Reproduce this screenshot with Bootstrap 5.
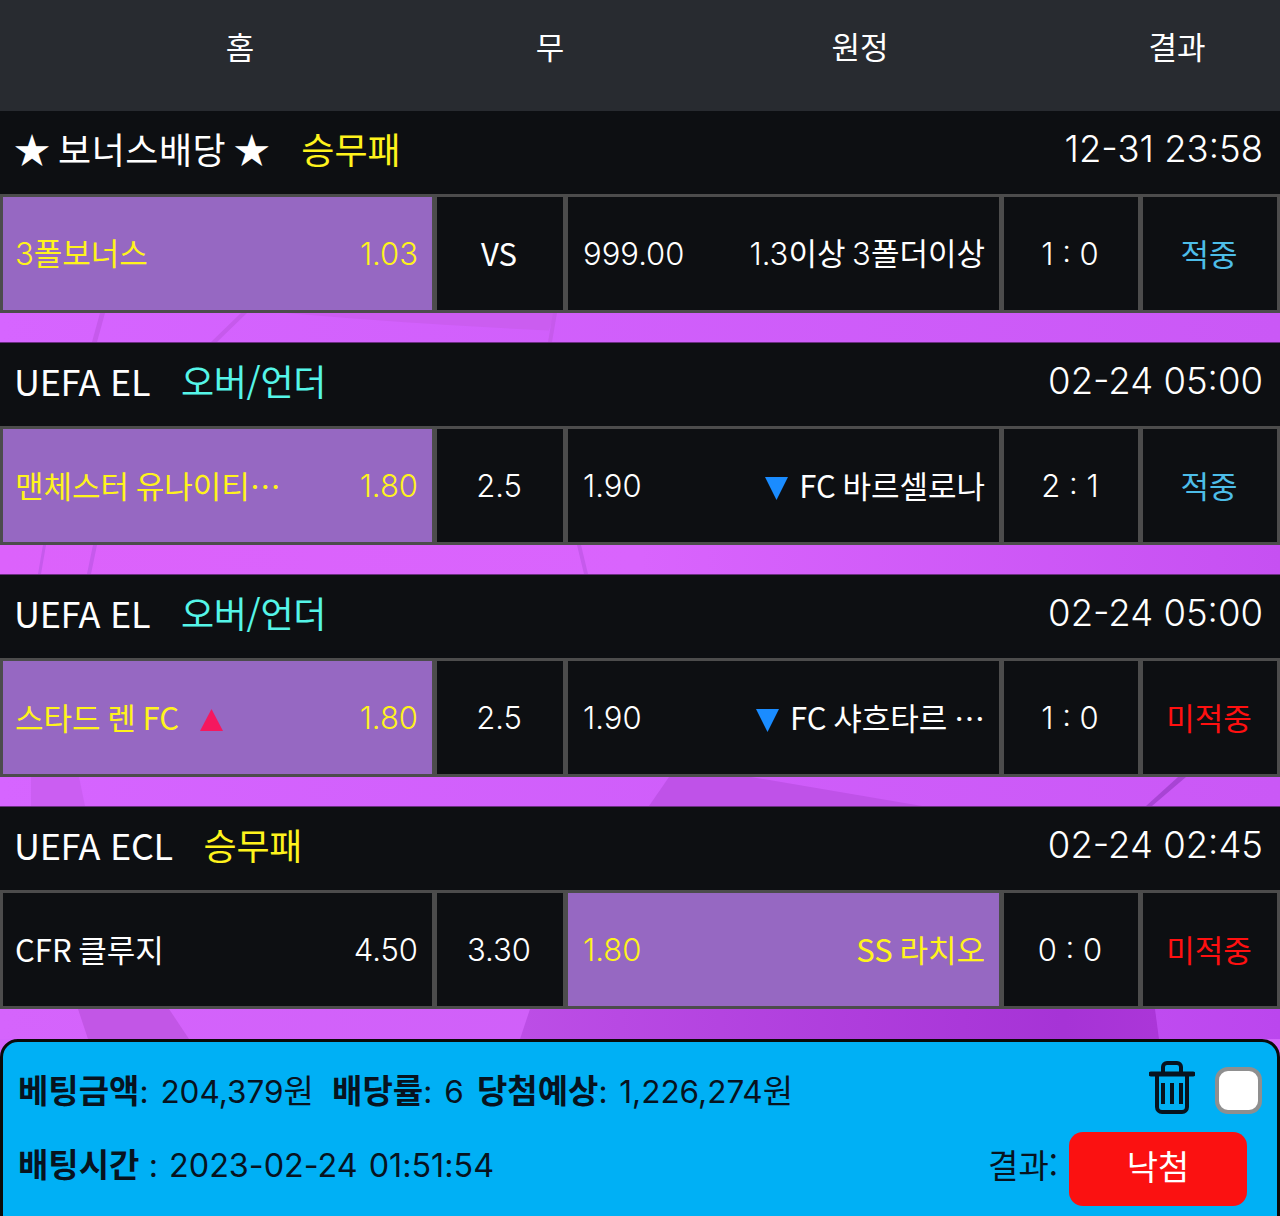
<!DOCTYPE html>
<html lang="ko">
<head>
    <meta charset="UTF-8">
    <meta name="viewport" content="width=device-width, initial-scale=1.0">
    <link href="https://cdn.jsdelivr.net/npm/bootstrap@5.3.2/dist/css/bootstrap.min.css" rel="stylesheet"/>
    <script src="https://cdn.jsdelivr.net/npm/bootstrap@5.3.2/dist/js/bootstrap.bundle.min.js"></script>
    <title>베팅내역</title>
    <style>
        html, body {
            height: 1216px;
            overflow: hidden;
        }
        body {
            background-color: #d263fb;
            color: #fff;
            font-family: "Noto Sans CJK KR", "Noto Sans", sans-serif;
            font-weight: 400;
        }
        .num {
            font-family: Inter, "Noto Sans", sans-serif;
            font-weight: 300;
        }
        .top-head {
            height: 111px;
            background-color: #282b30;
            font-size: 31px;
            display: grid;
            grid-template-columns: 480px 140px 480px 154px;
            padding-bottom: 18px;
        }
        .game-title {
            height: 83px;
            background-color: #0d0f12;
            font-size: 36px;
            padding: 0 17px 10px 14px;
        }
        .game-title > .num {
            font-size: 36.5px;
            padding-top: 4px;
        }
        .league-name {
            letter-spacing: -.3px;
        }
        .title-tag {
            margin-left: 21px;
        }
        .star-head {
            word-spacing: -3px;
            letter-spacing: .5px;
        }
        .game-row {
            height: 119px;
            padding: 3px;
            background-color: #4c4c4c;
            display: grid;
            grid-template-columns: 429px 126px 431px 134px 134px;
            column-gap: 5px;
            font-size: 31px;
        }
        .game-cell {
            background-color: #0d0f12;
            padding: 0 14px 1px 12px;
        }
        .game-cell.num {
            padding-top: 2px;
            padding-bottom: 0;
        }
        .game-cell > .num {
            padding-top: 2px;
        }
        .game-cell.mid-cell {
            padding-left: 15px;
        }
        .game-cell.picked {
            background-color: #9668c2;
            color: #fff31c;
        }
        .team-name {
            white-space: nowrap;
            word-spacing: -2px;
        }
        .tri-down {
            vertical-align: -2px;
            margin-right: 4px;
        }
        .tri-up {
            vertical-align: -1px;
            margin-left: 14px;
        }
        .c-yellow { color: #fff31c; }
        .c-cyan { color: #55f5e8; }
        .c-hit { color: #4dbde8; }
        .c-miss { color: #ff1010; }
        .band {
            display: block;
            width: 1280px;
            height: 30px;
            border-bottom: 1px solid #6a2f80;
        }
        .last-band {
            border-bottom: 0;
        }
        .bet-panel {
            height: 190px;
            background-color: #00b0f5;
            border: 3px solid #0a0a0a;
            border-radius: 18px 18px 0 0;
            color: #07131f;
            font-size: 33px;
            padding: 11px 15px 0;
        }
        .bet-panel b {
            font-weight: 700;
        }
        .bet-panel .num {
            font-size: 31.5px;
            font-weight: 400;
            word-spacing: 3px;
        }
        .bet-panel .bet-date {
            font-size: 32.3px;
            word-spacing: 2px;
        }
        .bet-label {
            margin-left: 9px;
        }
        .bet-line {
            height: 74px;
        }
        .bet-line.first-line {
            height: 75px;
        }
        .trash-icon {
            margin-bottom: 6px;
        }
        .check-box {
            width: 47px;
            height: 47px;
            background-color: #fff;
            border: 4px solid #8f8f8f;
            border-radius: 13px;
            margin-left: 20px;
        }
        .lost-btn {
            width: 178px;
            height: 74px;
            background-color: #fb1111;
            color: #fff;
            border-radius: 14px;
            font-size: 34px;
            margin: 7px 15px 0 11px;
            padding-bottom: 6px;
        }
    </style>
</head>
<body>
    <div class="top-head text-center align-items-center">
        <div>홈</div>
        <div>무</div>
        <div>원정</div>
        <div>결과</div>
    </div>

    <div class="game-title d-flex justify-content-between align-items-center">
        <div><span class="star-head">★ 보너스배당 ★</span> <span class="c-yellow title-tag">승무패</span></div>
        <div class="num">12-31 23:58</div>
    </div>
    <div class="game-row">
        <div class="game-cell picked d-flex justify-content-between align-items-center"><span class="team-name"><span class="num">3</span>폴보너스</span><span class="num">1.03</span></div>
        <div class="game-cell d-flex justify-content-center align-items-center">VS</div>
        <div class="game-cell mid-cell d-flex justify-content-between align-items-center"><span class="num">999.00</span><span class="team-name"><span class="num">1.3</span>이상 <span class="num">3</span>폴더이상</span></div>
        <div class="game-cell d-flex justify-content-center align-items-center num">1 : 0</div>
        <div class="game-cell c-hit d-flex justify-content-center align-items-center">적중</div>
    </div>
    <svg class="band" viewBox="0 0 1280 30" preserveAspectRatio="none">
        <defs><linearGradient id="g1" x1="0" x2="1"><stop offset="0" stop-color="#d665ff"/><stop offset="1" stop-color="#ca58f6"/></linearGradient></defs>
        <rect width="1280" height="30" fill="url(#g1)"/>
        <path d="M100 0h5l-8 30h-5zM241 0h6l-30 30h-6z" fill="#c65aec"/>
        <path d="M286 0H555L549 18Q420 12 286 0z" fill="#cb5df0"/>
        <path d="M553 0h4l-5 30h-4z" fill="#c65aec"/>
    </svg>

    <div class="game-title d-flex justify-content-between align-items-center">
        <div class="league-name">UEFA EL <span class="c-cyan title-tag">오버/언더</span></div>
        <div class="num">02-24 05:00</div>
    </div>
    <div class="game-row">
        <div class="game-cell picked d-flex justify-content-between align-items-center"><span class="team-name">맨체스터 유나이티⋯</span><span class="num">1.80</span></div>
        <div class="game-cell d-flex justify-content-center align-items-center num">2.5</div>
        <div class="game-cell mid-cell d-flex justify-content-between align-items-center"><span class="num">1.90</span><span class="team-name"><svg class="tri-down" width="23" height="23" viewBox="0 0 23 23"><path d="M0 0H23L11.5 23z" fill="#1a8cff"/></svg> FC 바르셀로나</span></div>
        <div class="game-cell d-flex justify-content-center align-items-center num">2 : 1</div>
        <div class="game-cell c-hit d-flex justify-content-center align-items-center">적중</div>
    </div>
    <svg class="band" viewBox="0 0 1280 30" preserveAspectRatio="none">
        <defs><linearGradient id="g3" x1="0" x2="1"><stop offset="0" stop-color="#dc62fb"/><stop offset=".5" stop-color="#d964fd"/><stop offset="1" stop-color="#c650f2"/></linearGradient></defs>
        <rect width="1280" height="30" fill="url(#g3)"/>
        <path d="M43 0h3l-5 30h-3zM93 0h4l-6 30h-4zM577 0h4l7 30h-4z" fill="#c65aec"/>
    </svg>

    <div class="game-title d-flex justify-content-between align-items-center">
        <div class="league-name">UEFA EL <span class="c-cyan title-tag">오버/언더</span></div>
        <div class="num">02-24 05:00</div>
    </div>
    <div class="game-row">
        <div class="game-cell picked d-flex justify-content-between align-items-center"><span class="team-name">스타드 렌 FC <svg class="tri-up" width="23" height="22" viewBox="0 0 23 22"><path d="M0 22H23L11.5 0z" fill="#f5185f"/></svg></span><span class="num">1.80</span></div>
        <div class="game-cell d-flex justify-content-center align-items-center num">2.5</div>
        <div class="game-cell mid-cell d-flex justify-content-between align-items-center"><span class="num">1.90</span><span class="team-name"><svg class="tri-down" width="23" height="23" viewBox="0 0 23 23"><path d="M0 0H23L11.5 23z" fill="#1a8cff"/></svg> FC 샤흐타르 ⋯</span></div>
        <div class="game-cell d-flex justify-content-center align-items-center num">1 : 0</div>
        <div class="game-cell c-miss d-flex justify-content-center align-items-center">미적중</div>
    </div>
    <svg class="band" viewBox="0 0 1280 30" preserveAspectRatio="none">
        <rect width="1280" height="30" fill="url(#g1)"/>
        <path d="M31 0h48l6 30H31z" fill="#cb5ef2"/>
        <path d="M669 0h82l171 30H649z" fill="#bf52e8"/>
        <path d="M1178 0h8l-34 30h-6z" fill="#a844d4"/>
    </svg>

    <div class="game-title d-flex justify-content-between align-items-center">
        <div class="league-name">UEFA ECL <span class="c-yellow title-tag">승무패</span></div>
        <div class="num">02-24 02:45</div>
    </div>
    <div class="game-row">
        <div class="game-cell d-flex justify-content-between align-items-center"><span class="team-name">CFR 클루지</span><span class="num">4.50</span></div>
        <div class="game-cell d-flex justify-content-center align-items-center num">3.30</div>
        <div class="game-cell mid-cell picked d-flex justify-content-between align-items-center"><span class="num">1.80</span><span class="team-name">SS 라치오</span></div>
        <div class="game-cell d-flex justify-content-center align-items-center num">0 : 0</div>
        <div class="game-cell c-miss d-flex justify-content-center align-items-center">미적중</div>
    </div>
    <svg class="band last-band" viewBox="0 0 1280 30" preserveAspectRatio="none">
        <defs>
            <linearGradient id="g2" x1="0" x2="1"><stop offset="0" stop-color="#d564fc"/><stop offset=".5" stop-color="#cf5ff8"/><stop offset="1" stop-color="#bb46ee"/></linearGradient>
            <linearGradient id="g4" x1="0" x2="1"><stop offset="0" stop-color="#bc4ee6"/><stop offset=".85" stop-color="#a633d6"/><stop offset="1" stop-color="#ab36d8"/></linearGradient>
        </defs>
        <rect width="1280" height="30" fill="url(#g2)"/>
        <path d="M78 0h91l20 30H88z" fill="#c256e6"/>
        <path d="M530 0H1155l4 30H520z" fill="url(#g4)"/>
    </svg>

    <div class="bet-panel">
        <div class="bet-line first-line d-flex align-items-center">
            <div class="flex-grow-1"><b>베팅금액</b><span class="num">: 204,379</span>원 <b class="bet-label">배당률</b><span class="num">: 6</span> <b class="ms-1">당첨예상</b><span class="num">: 1,226,274</span>원</div>
            <svg class="trash-icon" width="46" height="53" viewBox="0 0 46 53" fill="none" stroke="#07131f" stroke-width="4">
                <path d="M14 11V6a4 4 0 0 1 4-4h10a4 4 0 0 1 4 4v5"/>
                <path d="M2 13H44" stroke-width="5" stroke-linecap="round"/>
                <path d="M8 13v33a5 5 0 0 0 5 5h20a5 5 0 0 0 5-5V13"/>
                <path d="M14 22v21M23 22v21M32 22v21"/>
            </svg>
            <div class="check-box"></div>
        </div>
        <div class="bet-line d-flex align-items-center">
            <div class="flex-grow-1"><b>배팅시간</b> <span class="num bet-date">: 2023-02-24 01:51:54</span></div>
            <div>결과:</div>
            <div class="lost-btn d-flex justify-content-center align-items-center">낙첨</div>
        </div>
    </div>
</body>
</html>
